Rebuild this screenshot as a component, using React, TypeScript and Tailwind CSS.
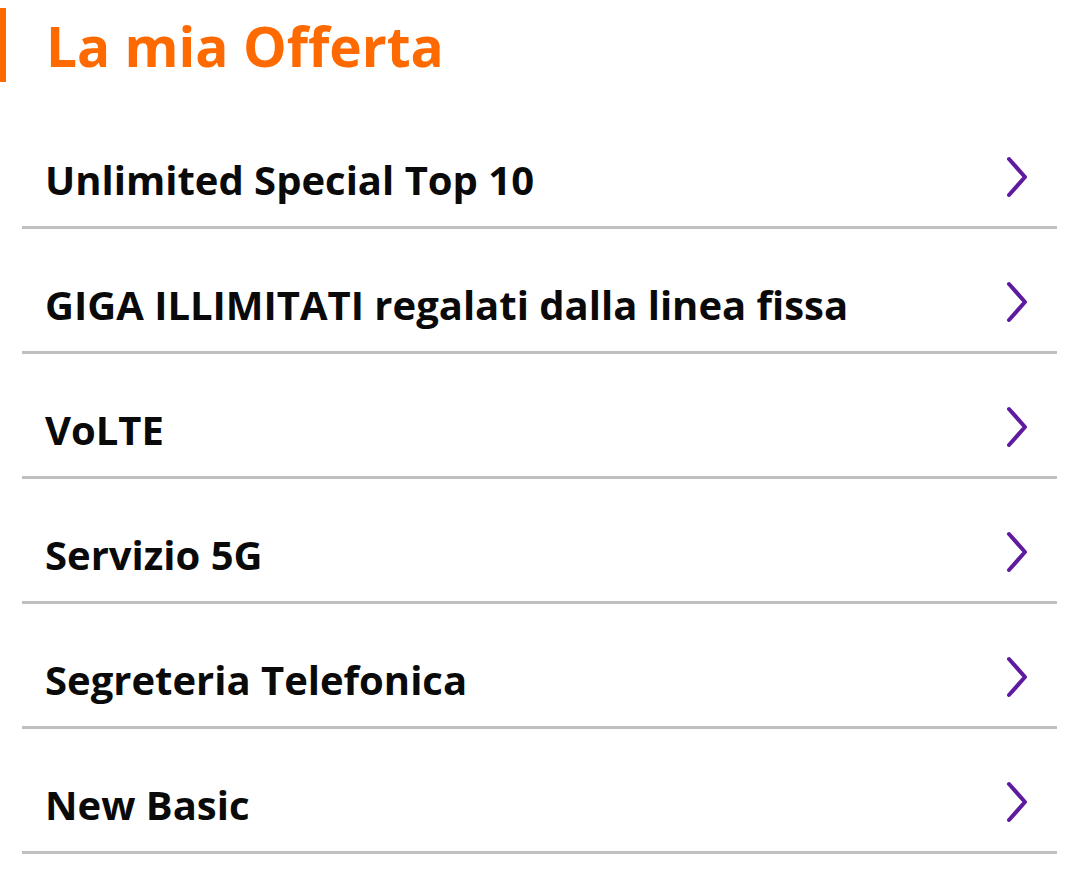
import React from "react";

const items = [
  "Unlimited Special Top 10",
  "GIGA ILLIMITATI regalati dalla linea fissa",
  "VoLTE",
  "Servizio 5G",
  "Segreteria Telefonica",
  "New Basic",
];

function Chevron() {
  return (
    <svg width="24" height="42" viewBox="0 0 24 42" fill="none" className="shrink-0">
      <path d="M4 3 L20 21 L4 39" stroke="#5e1b9f" strokeWidth="4" strokeLinecap="round" strokeLinejoin="round" />
    </svg>
  );
}

export default function App() {
  return (
    <div className="w-[1080px] h-[881px] bg-white overflow-hidden" style={{ fontFamily: '"Open Sans", sans-serif' }}>
      <div className="flex items-center h-[104px] pb-[14px]">
        <div className="w-[6px] h-[74px] bg-[#ff6a00]" />
        <h1 className="ml-[40px] text-[55px] font-bold text-[#ff6a00] leading-none">La mia Offerta</h1>
      </div>
      <ul className="ml-[22px] mr-[23px]">
        {items.map((t) => (
          <li key={t} className="flex items-center justify-between h-[125px] pt-[30px] border-b-[3px] border-[#c0c0c0]">
            <span className="ml-[23px] text-[40px] font-bold text-[#0a0a0a] leading-none">{t}</span>
            <span className="mr-[28px] -mt-[6px]"><Chevron /></span>
          </li>
        ))}
      </ul>
    </div>
  );
}
